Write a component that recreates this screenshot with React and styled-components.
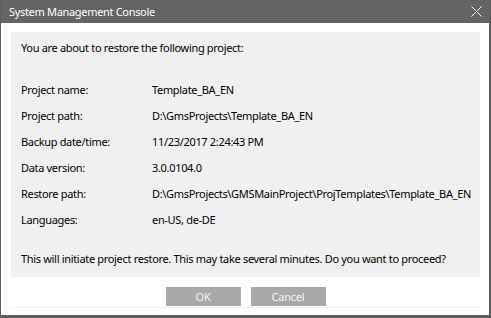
import React from 'react';
import styled, { createGlobalStyle } from 'styled-components';

const GlobalStyle = createGlobalStyle`
  html, body {
    margin: 0;
    padding: 0;
    background: #ffffff;
  }
  body {
    font-family: "Noto Sans", "Open Sans", sans-serif;
    font-size: 11px;
    letter-spacing: -0.32px;
    color: #000000;
  }
`;

const Window = styled.div`
  width: 491px;
  height: 318px;
  box-sizing: border-box;
  display: flex;
  flex-direction: column;
  background: #ffffff;
  border-left: 1px solid #5f5f5f;
  border-right: 2px solid #5f5f5f;
  border-bottom: 3px solid #5f5f5f;
`;

const TitleBar = styled.div`
  height: 23px;
  flex: none;
  display: flex;
  align-items: center;
  justify-content: space-between;
  background: #646464;
  color: #ffffff;
  padding: 0 7px 0 8px;
`;

const CloseButton = styled.div`
  width: 12px;
  height: 12px;
  display: flex;
  align-items: center;
  justify-content: center;
`;

const Body = styled.div`
  flex: 1;
  display: flex;
  flex-direction: column;
  padding: 9px 9px 0 10px;
`;

const Panel = styled.div`
  background: #f0f0f0;
  padding: 8px 10px 10px 10px;
  display: flex;
  flex-direction: column;
`;

const Line = styled.div`
  line-height: 16px;
  height: 16px;
  white-space: nowrap;
`;

const Details = styled.div`
  display: grid;
  grid-template-columns: 131px 1fr;
  grid-auto-rows: 26px;
  align-items: center;
  margin: 20px 0 19px;
  white-space: nowrap;
`;

const Footer = styled.div`
  display: flex;
  justify-content: center;
  gap: 10px;
  padding: 10px 0 0;
  height: 20px;
  border-bottom: 1px solid #f2f2f2;
`;

const Button = styled.button`
  width: 75px;
  height: 19px;
  border: none;
  padding: 0;
  background: #a9a9a9;
  color: #f4f4f4;
  font-family: "Noto Sans", "Open Sans", sans-serif;
  font-size: 11px;
  letter-spacing: -0.2px;
  line-height: 19px;
`;

const rows = [
  ['Project name:', 'Template_BA_EN'],
  ['Project path:', 'D:\\GmsProjects\\Template_BA_EN'],
  ['Backup date/time:', '11/23/2017 2:24:43 PM'],
  ['Data version:', '3.0.0104.0'],
  ['Restore path:', 'D:\\GmsProjects\\GMSMainProject\\ProjTemplates\\Template_BA_EN'],
  ['Languages:', 'en-US, de-DE'],
];

export default function App() {
  return (
    <>
      <GlobalStyle />
      <Window>
        <TitleBar>
          <span>System Management Console</span>
          <CloseButton>
            <svg width="11" height="11" viewBox="0 0 11 11">
              <path d="M0.5 0.5 L10.5 10.5 M10.5 0.5 L0.5 10.5" stroke="#ffffff" strokeWidth="1" fill="none" />
            </svg>
          </CloseButton>
        </TitleBar>
        <Body>
          <Panel>
            <Line>You are about to restore the following project:</Line>
            <Details>
              {rows.map(([label, value]) => (
                <React.Fragment key={label}>
                  <span>{label}</span>
                  <span>{value}</span>
                </React.Fragment>
              ))}
            </Details>
            <Line>This will initiate project restore. This may take several minutes. Do you want to proceed?</Line>
          </Panel>
          <Footer>
            <Button>OK</Button>
            <Button>Cancel</Button>
          </Footer>
        </Body>
      </Window>
    </>
  );
}
